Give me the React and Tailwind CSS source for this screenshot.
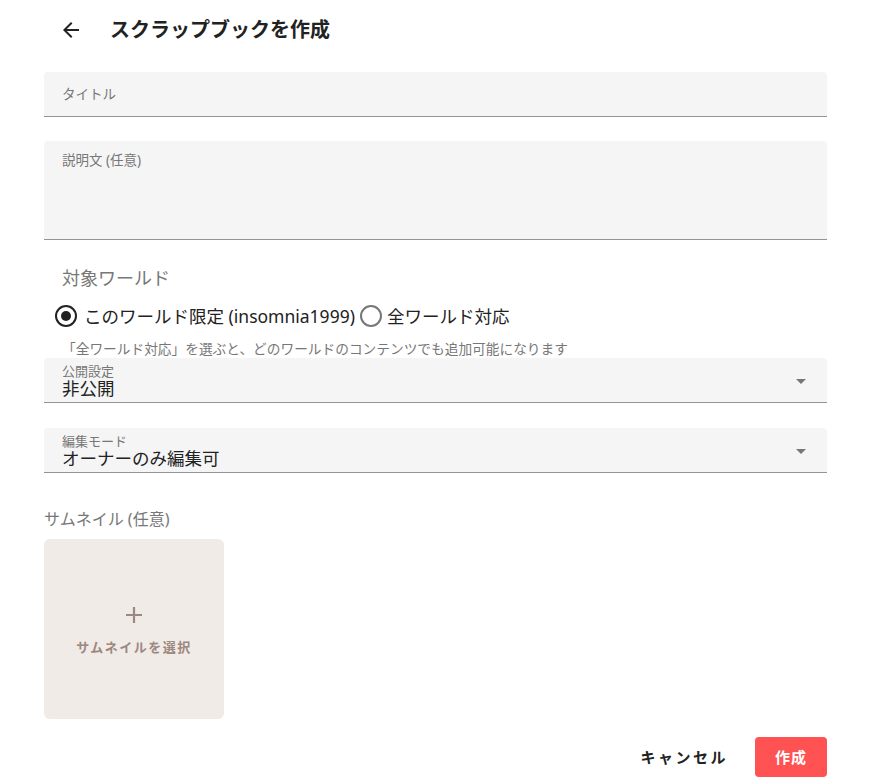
export default function App() {
  const font = { fontFamily: '"Noto Sans", "Noto Sans CJK JP", sans-serif' };
  return (
    <div className="w-[895px] h-[783px] bg-white text-[#222]" style={font}>
      <div className="flex items-center h-[60px] pl-[59px]">
        <svg width="24" height="24" viewBox="0 0 24 24" className="text-[#222]">
          <path d="M20 11H7.83l5.59-5.59L12 4l-8 8 8 8 1.41-1.41L7.83 13H20v-2z" fill="currentColor" />
        </svg>
        <h1 className="ml-[27px] text-[20px] font-bold">スクラップブックを作成</h1>
      </div>

      <div className="mx-[44px] w-[783px] mt-[12px] flex flex-col">
        <div className="h-[45px] bg-[#f5f5f5] rounded-t border-b border-[#949494] px-[18px] flex items-center">
          <span className="text-[13.5px] leading-[16px] text-[#777]">タイトル</span>
        </div>

        <div className="mt-[24px] h-[99px] bg-[#f5f5f5] rounded-t border-b border-[#949494] px-[18px] pt-[11px]">
          <div className="text-[13.5px] leading-[16px] text-[#777]">説明文 (任意)</div>
        </div>

        <div className="mt-[26px] px-[18px] text-[18px] leading-[24px] text-[#777]">対象ワールド</div>

        <div className="mt-[14px] h-[24px] flex items-center text-[17.5px] leading-[24px] text-[#222]">
          <span className="ml-[11px] w-[22px] h-[22px] rounded-full border-2 border-[#222] flex items-center justify-center">
            <span className="w-[10px] h-[10px] rounded-full bg-[#222]" />
          </span>
          <span className="ml-[7px]">このワールド限定 (insomnia1999)</span>
          <span className="ml-[5px] w-[22px] h-[22px] rounded-full border-2 border-[#777]" />
          <span className="ml-[5px]">全ワールド対応</span>
        </div>

        <div className="mt-[12px] px-[18px] text-[13.7px] leading-[18px] text-[#777]">
          「全ワールド対応」を選ぶと、どのワールドのコンテンツでも追加可能になります
        </div>

        <div className="h-[45px] bg-[#f5f5f5] rounded-t border-b border-[#949494] pl-[18px] pt-[6px] flex items-start justify-between">
          <div className="flex flex-col">
            <span className="text-[13px] text-[#777] leading-[15px]">公開設定</span>
            <span className="text-[17.5px] text-[#222] leading-[19px]">非公開</span>
          </div>
          <svg width="24" height="24" viewBox="0 0 24 24" className="mr-[14px] mt-[5px] text-[#777]">
            <path d="M7 10l5 5 5-5z" fill="currentColor" />
          </svg>
        </div>

        <div className="mt-[25px] h-[45px] bg-[#f5f5f5] rounded-t border-b border-[#949494] pl-[18px] pt-[6px] flex items-start justify-between">
          <div className="flex flex-col">
            <span className="text-[13px] text-[#777] leading-[15px]">編集モード</span>
            <span className="text-[17.5px] text-[#222] leading-[19px]">オーナーのみ編集可</span>
          </div>
          <svg width="24" height="24" viewBox="0 0 24 24" className="mr-[14px] mt-[5px] text-[#777]">
            <path d="M7 10l5 5 5-5z" fill="currentColor" />
          </svg>
        </div>

        <div className="mt-[34px] text-[16px] leading-[24px] text-[#777]">サムネイル (任意)</div>

        <button className="mt-[8px] w-[180px] h-[180px] rounded-md bg-[#f0ebe6] flex flex-col items-center justify-center text-[#9c8880]">
          <svg width="20" height="20" viewBox="0 0 20 20" className="mb-[14px] mt-[2px]">
            <path d="M10 2v16M2 10h16" stroke="currentColor" strokeWidth="2.2" />
          </svg>
          <span className="text-[13px] leading-[16px] font-bold tracking-[1.5px]">サムネイルを選択</span>
        </button>

        <div className="mt-[18px] flex justify-end items-center gap-[27px]">
          <button className="text-[15px] font-bold tracking-[2.5px] text-[#222]">キャンセル</button>
          <button className="w-[72px] h-[40px] rounded bg-[#ff5252] text-white text-[15px] font-bold tracking-[1px]">作成</button>
        </div>
      </div>
    </div>
  );
}
